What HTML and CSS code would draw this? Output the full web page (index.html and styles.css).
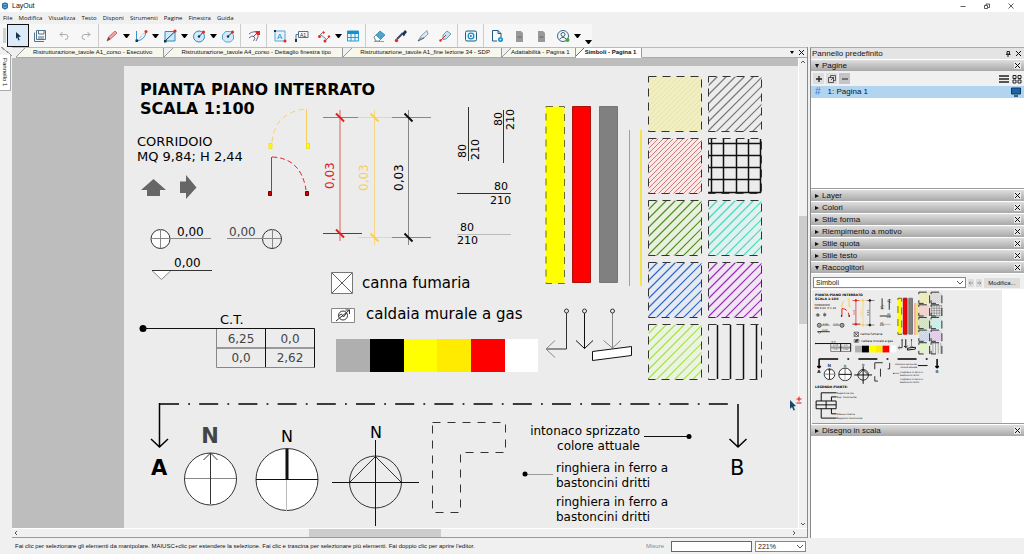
FILE: index.html
```html
<!DOCTYPE html>
<html lang="it">
<head>
    <meta charset="UTF-8">
    <meta name="viewport" content="width=device-width, initial-scale=1.0">
    <title>LayOut</title>
    <link rel="stylesheet" href="styles.css">
</head>
<body>
<div class="app">
    <header class="titlebar">
        <svg class="logo" viewBox="0 0 8 8"><path d="M1 1.5 4 .3 7 1.5V6L4 7.8 1 6z" fill="#2a75ac"/><path d="M2.3 3 4 2.2l1.8.8M2.3 4.8 4 5.6l1.8-.8" fill="none" stroke="#9fd0ee" stroke-width=".7"/></svg>
        <span class="app-name">LayOut</span>
        <div class="window-buttons">
            <button aria-label="Riduci"><svg viewBox="0 0 8 8"><path d="M1.5 4.5h5"/></svg></button>
            <button aria-label="Ripristina"><svg viewBox="0 0 8 8"><path d="M1.5 3.5h3v3h-3zM3 3.5V2h3.5v3.5H5"/></svg></button>
            <button aria-label="Chiudi"><svg viewBox="0 0 8 8"><path d="m1.5 1.5 5 5m0-5-5 5"/></svg></button>
        </div>
    </header>

    <nav class="menubar">
        <button>File</button>
        <button>Modifica</button>
        <button>Visualizza</button>
        <button>Testo</button>
        <button>Disponi</button>
        <button>Strumenti</button>
        <button>Pagine</button>
        <button>Finestra</button>
        <button>Guida</button>
    </nav>

    <div class="toolbar">
        <span class="grip"></span>
        <button class="tool selected" aria-label="Seleziona"><svg viewBox="0 0 14 14"><path class="ink" d="m5 3 5 4.500-2.500.4L8.700 11l-1.300.4-1.100-3L5 9.700z"/></svg></button>
        <button class="tool" aria-label="Salva"><svg viewBox="0 0 14 14"><path d="M3.500 1.500h9v9h-9zM5.500 1.500V5H11V1.500M1.500 3.500v9H11" fill="none" stroke="#53728c"/><path d="M5 7h6v3H5z" fill="#9eb3c3"/></svg></button>
        <div class="history">
            <button class="tool" aria-label="Annulla"><svg viewBox="0 0 14 14"><path d="M5.500 3 3 5.500 5.500 8M3 5.500h5.500Q11 5.500 11 8t-3 2.500" fill="none" stroke="#aaa"/></svg></button>
            <button class="tool" aria-label="Ripeti"><svg viewBox="0 0 14 14"><path d="M8.500 3 11 5.500 8.500 8M11 5.500H5.500Q3 5.500 3 8t3 2.500" fill="none" stroke="#aaa"/></svg></button>
        </div>
        <span class="sep"></span>
        <button class="tool" aria-label="Linea"><svg viewBox="0 0 14 14"><path d="m2 12 1.500-4 6.500-6 2 2-6.500 6z" fill="#f3a3a3" stroke="#c45252" stroke-width=".8"/><path d="m2 12 1.500-4L5.500 10z" fill="#554"/></svg></button>
        <button class="more" aria-label="Altre linee"></button>
        <button class="tool" aria-label="Arco"><svg viewBox="0 0 14 14"><path d="M2.500 2v10Q11 11 12 3" fill="none" stroke="#3d8fc6"/><path d="m2.500 12 9-9" stroke="#88a" stroke-dasharray="1 1"/><path class="ink" d="M1.500 10.500h2.500V13H1.500z"/><circle class="dot" cx="12" cy="2.500" r="1.500"/></svg></button>
        <button class="more" aria-label="Altri archi"></button>
        <button class="tool" aria-label="Rettangolo"><svg viewBox="0 0 14 14"><path d="M2 2.500h10v9.500H2z" fill="#d1e9f8" stroke="#2e8cc5"/><path d="m2 12 10-9.500" stroke="#17415f"/><path class="ink" d="M1 11h2.500v2.500H1z"/><circle class="dot" cx="12" cy="2" r="1.600"/></svg></button>
        <button class="more" aria-label="Altri rettangoli"></button>
        <button class="tool" aria-label="Cerchio"><svg viewBox="0 0 14 14"><circle cx="7" cy="7.500" r="5.500" fill="#d1e9f8" stroke="#2e8cc5"/><path d="m7 7.500 4-4" stroke="#17415f"/><circle class="ink" cx="7" cy="7.500" r="1.200"/><circle class="dot" cx="11.500" cy="3" r="1.600"/></svg></button>
        <button class="more" aria-label="Altri cerchi"></button>
        <button class="tool" aria-label="Poligono"><svg viewBox="0 0 14 14"><path d="M4.500 2.500h5L12.500 6v4l-3 3h-5l-3-3V6z" fill="#d1e9f8" stroke="#59a5d0"/><path d="m7 7.500 4-4" stroke="#17415f"/><circle class="ink" cx="7" cy="7.500" r="1.200"/><circle class="dot" cx="11.500" cy="3" r="1.600"/></svg></button>
        <span class="sep"></span>
        <button class="tool" aria-label="Offset"><svg viewBox="0 0 14 14"><path d="M2 5q5-4 9-1 1 4-2 8M2 9q3-3 5-1.500T6.500 12" fill="none" stroke="#668"/><path d="m6 8 4-4" stroke="#c22"/><path class="dot" d="M8 2h5v4h-3z"/></svg></button>
        <span class="sep"></span>
        <button class="tool" aria-label="Testo"><svg viewBox="0 0 14 14"><path d="M2 2h10v10H2z" fill="#e5f3fb" stroke="#59a5d0"/><text class="icon-text" x="4" y="10">A</text><path class="ink" d="M1 1h2v2H1z"/><circle class="dot" cx="12" cy="12" r="1.500"/></svg></button>
        <button class="tool" aria-label="Etichetta"><svg viewBox="0 0 14 14"><path d="M3.500 2.500h9.500v6H3.500zM3 5.500H1V12" fill="none" stroke="#53728c"/><text class="icon-text tiny" x="5" y="7.500">A1</text><path class="ink" d="M0 10h2v3H0z"/></svg></button>
        <button class="tool" aria-label="Quota"><svg viewBox="0 0 14 14"><path d="m2 7 3-3m3 8 4-4M3.500 5.500l6 5" stroke="#59799a"/><circle class="dot" cx="2.500" cy="7.500" r="1.500"/><circle class="dot" cx="8" cy="12" r="1.500"/><path class="dot" d="m5 3.500 1.500-1.500L8 3.500 6.500 5zM10.500 7.500 12 6l1.500 1.500L12 9z"/></svg></button>
        <button class="more" aria-label="Altre quote"></button>
        <button class="tool" aria-label="Tabella"><svg viewBox="0 0 14 14"><path d="M1.500 2h11v10h-11z" fill="#eaf6fc" stroke="#299bd0"/><path d="M1.500 2h11v3h-11z" fill="#168fcb"/><path d="M5 5v7m4-7v7M1.500 8.500h11" stroke="#299bd0"/></svg></button>
        <span class="sep"></span>
        <button class="tool" aria-label="Gomma"><svg viewBox="0 0 14 14"><path d="m2 8 6-6 5 4-6 6H4z" fill="#4ca4d1" stroke="#2c789f" stroke-width=".7"/><path d="m2 8 2-2 4.500 4.500L7 12H4z" fill="#fff" stroke="#578"  stroke-width=".7"/><path d="M2 12.500h10" stroke="#999"/></svg></button>
        <button class="tool" aria-label="Stile"><svg viewBox="0 0 14 14"><path d="m3 10 5-5" stroke="#446" stroke-width="2"/><path class="ink" d="m7 4 2-.5L11 1l2 2-2 2.500-1 2z"/><circle class="dot" cx="2.500" cy="11.500" r="1.700"/></svg></button>
        <button class="tool" aria-label="Dividi"><svg viewBox="0 0 14 14"><path d="m2 12 3-5 6-5.500L12 5 8 9H5z" fill="#dce9f1" stroke="#678ba5" stroke-width=".8"/><path d="m2 12 6-3" stroke="#456"/></svg></button>
        <button class="tool" aria-label="Unisci"><svg viewBox="0 0 14 14"><path d="m5 6 4-4 4 3-5 5-3 .5z" fill="#c7e4f3" stroke="#5584a5" stroke-width=".8"/><path d="m2 12 6-6" stroke="#c33"/><circle class="dot" cx="2.500" cy="11.500" r="1.200"/></svg></button>
        <span class="sep"></span>
        <button class="tool" aria-label="Presentazione"><svg viewBox="0 0 14 14"><rect x="1.500" y="2" width="11" height="10" rx="1.500" fill="#e9f5fb" stroke="#235d82"/><circle cx="7" cy="7" r="2.800" fill="#fff" stroke="#168fcb" stroke-width="1.300"/><path class="ink" d="m6.300 5.700 2 1.300-2 1.300z"/></svg></button>
        <span class="sep"></span>
        <button class="tool" aria-label="Aggiungi pagina"><svg viewBox="0 0 14 14"><path d="M7 12H2.500V1.500h5.500L11 4.500V8M8 1.500v3h3" fill="none" stroke="#24587e"/><circle cx="10.500" cy="10.500" r="2.500" fill="#168fcb"/><path d="M9.500 10.500h2m-1-1v2" stroke="#fff" stroke-width=".6"/></svg></button>
        <button class="tool" aria-label="Pagina precedente"><svg viewBox="0 0 14 14"><path d="M4 2h5l2 2v9H4z" fill="#999"/><path d="M5.500 8h4" stroke="#666"/></svg></button>
        <button class="tool" aria-label="Pagina successiva"><svg viewBox="0 0 14 14"><path d="M4 2h5l2 2v9H4z" fill="#999"/><path d="M5.500 8h4" stroke="#666"/></svg></button>
        <button class="tool" aria-label="Account"><svg viewBox="0 0 14 14"><circle cx="7" cy="7" r="5.500" fill="#f4f9fc" stroke="#40637f"/><circle cx="7" cy="5.500" r="2" fill="none" stroke="#40637f"/><path d="M3.500 10.500Q7 6 10.500 10.500" fill="none" stroke="#40637f"/><circle cx="11.500" cy="11" r="2" fill="#49a147"/></svg></button>
        <button class="more" aria-label="Menu account"></button>
        <button class="more overflow" aria-label="Altri strumenti"></button>
    </div>

    <div class="workspace">
        <aside class="rail"><button>Pannello 1</button></aside>

        <main class="document">
            <div class="tabs">
                <button class="tab">Ristrutturazione_tavole A1_corso - Esecutivo</button>
                <button class="tab">Ristrutturazione_tavole A4_corso - Dettaglio finestra tipo</button>
                <button class="tab">Ristrutturazione_tavole A1_fine lezione 34 - SDP</button>
                <button class="tab compact">Adattabilità - Pagina 1</button>
                <button class="tab compact active">Simboli - Pagina 1</button>
                <div class="tab-actions">
                    <button class="tab-list" aria-label="Elenco schede"></button>
                    <button class="x" aria-label="Chiudi scheda"></button>
                </div>
            </div>

            <div class="view">
                <div class="canvas">
                    <div class="page">
                        <svg class="sheet" width="674" height="463" viewBox="124 66 674 463">
                            <defs>
                                <!-- retini a 45 gradi -->
                                <symbol id="hatch-wide" viewBox="0 0 53 55">
                                    <path d="M9 0 0 9M18 0 0 18M27 0 0 27M36 0 0 36M45 0 0 45M54 0 0 54M63 0 0 63M72 0 0 72M81 0 0 81M90 0 0 90M99 0 0 99" stroke="currentColor" stroke-width="1.2"/>
                                </symbol>
                                <symbol id="hatch-dense" viewBox="0 0 53 55">
                                    <path d="M5 0 0 5M10 0 0 10M15 0 0 15M20 0 0 20M25 0 0 25M30 0 0 30M35 0 0 35M40 0 0 40M45 0 0 45M50 0 0 50M55 0 0 55M60 0 0 60M65 0 0 65M70 0 0 70M75 0 0 75M80 0 0 80M85 0 0 85M90 0 0 90M95 0 0 95M100 0 0 100M105 0 0 105" stroke="currentColor"/>
                                </symbol>
                            </defs>
                            <g id="drawing" class="drawing">
                                <text class="heading" x="140" y="95">PIANTA PIANO INTERRATO</text>
                                <text class="heading" x="140" y="114">SCALA 1:100</text>
                                <text class="room" x="137" y="146">CORRIDOIO</text>
                                <text class="room" x="137" y="161">MQ 9,84; H 2,44</text>

                                <!-- frecce -->
                                <path d="m153.500 179 12.500 11h-6v6h-13v-6h-6zM180 181.500h6v-6.500l10.500 12.500L186 199v-6h-6z" fill="#666"/>

                                <!-- porte -->
                                <path class="amber" d="M306.500 144v-35"/>
                                <path class="amber" d="M272 142q3-30 34-33" stroke-dasharray="5 4"/>
                                <path d="M269 143.500h3v5h-3zM306.500 143.500h3v5h-3z" fill="#ff0" stroke="#f0e020"/>
                                <path class="red" d="M271.500 191v-34"/>
                                <path class="red" d="M272 157q29 1 34 33" stroke-dasharray="5 3"/>
                                <path d="M268.500 191.500h3v4h-3zM305.500 191.500h3v4h-3z" fill="#d00" stroke="#600"/>

                                <!-- quote altimetriche -->
                                <circle class="thin" cx="160.500" cy="239" r="9.500" fill="#fff"/>
                                <path class="gray" d="M151 238.500h60M160.500 229v19"/>
                                <circle class="thin" cx="272" cy="239" r="9.500"/>
                                <path class="gray" d="M227 238.500h54M272.500 229v19"/>
                                <path class="gray" d="M152 270.500h19l-9.500 9z" fill="#fff"/>
                                <path class="thin" d="M152 270.500h60"/>
                                <text x="177" y="236">0,00</text>
                                <text class="soft" x="229" y="236">0,00</text>
                                <text x="174" y="267">0,00</text>

                                <!-- linee di quota -->
                                <path class="red pale" d="M340 110v131M323 117.500h35"/>
                                <path d="M323 233.500h39" stroke="#922"/>
                                <path class="red tick" d="m336 113.500 8 8m-8 108 8 8"/>
                                <path class="amber pale" d="M374.500 110v135M358 117.500h34m-34 120h34"/>
                                <path class="amber tick" d="m370.500 113.500 8 8m-8 112 8 8"/>
                                <path class="gray" d="M408.500 110v135M392 117.500h39m-39 120h39"/>
                                <path class="black tick" d="m404.500 113.500 8 8m-8 112 8 8"/>
                                <text class="red-text" transform="translate(334 189) rotate(-90)">0,03</text>
                                <text class="amber-text" transform="translate(368 191) rotate(-90)">0,03</text>
                                <text transform="translate(403 191) rotate(-90)">0,03</text>

                                <!-- aperture -->
                                <path class="thin" d="M468.500 107v54M503.500 110v53M457 193.500h54"/>
                                <path d="M457 234.500h54" stroke="#bbb"/>
                                <g class="opening">
                                    <text transform="translate(466 158) rotate(-90)">80</text>
                                    <text transform="translate(479 160) rotate(-90)">210</text>
                                    <text transform="translate(502 126) rotate(-90)">80</text>
                                    <text transform="translate(514 130) rotate(-90)">210</text>
                                    <text x="494" y="190">80</text>
                                    <text x="490" y="204">210</text>
                                    <text x="460" y="231">80</text>
                                    <text x="457" y="244">210</text>
                                </g>

                                <!-- murature -->
                                <path d="M546 106.500h18.500v177H546z" fill="#ff0"/>
                                <path class="black" d="M546 106.500h18.500v177H546z" stroke-dasharray="7 6" opacity=".6"/>
                                <path d="M572.500 106.500h18v176h-18z" fill="#f00" stroke="#a11"/>
                                <path d="M599.500 106.500h18v176h-18z" fill="#808080" stroke="#777"/>
                                <path d="M629.500 130v156" stroke="#f07c7c"/>
                                <path d="M641 130v156" stroke="#f2e44c" stroke-width="2"/>

                                <!-- retini -->
                                <g class="swatches">
                                    <path d="M648.500 76.500h53v55h-53z" fill="#f1eec4"/>
                                    <path d="M648.500 138.500h53v55h-53z" fill="#fae9e6"/>
                                    <path d="M648.500 200.500h53v55h-53z" fill="#e9f0e0"/>
                                    <path d="M708.500 200.500h53v55h-53z" fill="#e1f1ee"/>
                                    <path d="M648.500 262.500h53v55h-53z" fill="#e5eaf2"/>
                                    <path d="M708.500 262.500h53v55h-53z" fill="#f0e5f3"/>
                                    <path d="M648.500 324.500h53v55h-53z" fill="#edf3e1"/>
                                    <use href="#hatch-dense" x="648.500" y="76.500" width="53" height="55" color="#e8e5a4"/>
                                    <use href="#hatch-wide" x="708.500" y="76.500" width="53" height="55" color="#777"/>
                                    <use href="#hatch-dense" x="648.500" y="138.500" width="53" height="55" color="#d07878"/>
                                    <use href="#hatch-wide" x="648.500" y="200.500" width="53" height="55" color="#4f9020"/>
                                    <use href="#hatch-wide" x="708.500" y="200.500" width="53" height="55" color="#44d9c0"/>
                                    <use href="#hatch-wide" x="648.500" y="262.500" width="53" height="55" color="#2f68c8"/>
                                    <use href="#hatch-wide" x="708.500" y="262.500" width="53" height="55" color="#9d2cba"/>
                                    <use href="#hatch-wide" x="648.500" y="324.500" width="53" height="55" color="#a2e44c"/>
                                    <path class="black" d="M708 143.500h53m-53 12h53m-53 12h53m-53 12h53m-53 13h53M711.500 139v54m12-54v54m13-54v54m12-54v54m12-54v54M717.500 325v54m13-54v54m13-54v54m13-54v54" stroke-width="1.500"/>
                                    <path class="swatch" d="M648.500 76.500h53v55h-53zM708.500 76.500h53v55h-53zM648.500 138.500h53v55h-53zM708.500 138.500h53v55h-53zM648.500 200.500h53v55h-53zM708.500 200.500h53v55h-53zM648.500 262.500h53v55h-53zM708.500 262.500h53v55h-53zM648.500 324.500h53v55h-53zM708.500 324.500h53v55h-53z"/>
                                </g>

                                <!-- canna fumaria e caldaia -->
                                <path d="M331.500 272.500h21v21h-21z" fill="#fff" stroke="#777"/>
                                <path class="thin" d="m332 273 20 20m0-20-20 20" stroke-width=".8"/>
                                <path class="gray" d="M331.500 308.500h23v14h-23z" fill="#fff"/>
                                <path class="thin" d="m336 321 13.500-11m-4 0h4v4m-11 2 3-2 2 3 3-4"/>
                                <circle class="thin" cx="343" cy="315.500" r="4.500"/>
                                <text class="legend" x="362" y="288">canna fumaria</text>
                                <text class="legend" x="366" y="319">caldaia murale a gas</text>

                                <!-- etichetta C.T. -->
                                <circle cx="143" cy="328.500" r="3.500"/>
                                <path class="gray" d="M216.500 328v39.500h98"/>
                                <path d="M217 348h98" stroke="#999" stroke-width="2"/>
                                <path class="black" d="M143 328.500h171.500v39M265.500 328v39"/>
                                <text class="room" x="220" y="324">C.T.</text>
                                <g class="soft center">
                                    <text x="241" y="343">6,25</text>
                                    <text x="290" y="343">0,0</text>
                                    <text x="241" y="362">0,0</text>
                                    <text x="290" y="362">2,62</text>
                                </g>

                                <!-- campioni colore -->
                                <path d="M336 339h34v33h-34z" fill="#afafaf"/>
                                <path d="M370 339h34v33h-34z" fill="#000"/>
                                <path d="M404 339h33v33h-33z" fill="#ff0"/>
                                <path d="M437 339h34v33h-34z" fill="#ffeb00"/>
                                <path d="M471 339h34v33h-34z" fill="#f00"/>
                                <path d="M505 339h33v33h-33z" fill="#fff"/>

                                <!-- richiami -->
                                <path class="thin" d="M566.500 313v36H546"/>
                                <path class="gray" d="m555 340.500-9 8.500 9 8.500"/>
                                <path class="black" d="M584.500 313v35.500m-8.500-8 8.500 8 8.500-8"/>
                                <path class="gray" d="M612.500 313v35m-9-7.500 9 7.500 8-7.500"/>
                                <path class="black" d="m592.500 351.500 39-5v9l-39 5z" fill="#fff"/>
                                <circle class="thin" cx="566.500" cy="311" r="2"/>
                                <circle class="thin" cx="584.500" cy="311" r="2"/>
                                <circle class="thin" cx="612.500" cy="311" r="2"/>

                                <!-- linea di sezione -->
                                <path class="section" d="M160 404h568" stroke-dasharray="19 9.200 1.800 9.200"/>
                                <path class="section" d="M159.500 403v44m-8.500-8 8.500 8 8.500-8M738 404v43m-8.500-8 8.500 8 8.500-8"/>
                                <text class="section-a" x="151" y="475">A</text>
                                <text class="section-b" x="730" y="475">B</text>

                                <!-- nord -->
                                <circle class="thin" cx="210.500" cy="479" r="26" fill="#fff"/>
                                <path class="gray" d="M185 478.500h51"/>
                                <path class="thin" d="M210.500 453v51m-7-44 7-7 7 7"/>
                                <circle class="thin" cx="287" cy="479.500" r="31" fill="#fff"/>
                                <path d="M286.500 480v31" stroke="#bbb"/>
                                <path class="black" d="M256 479.500h62"/>
                                <path class="black scaled" d="M287 449v31" stroke-width="3"/>
                                <circle class="thin" cx="375.500" cy="482" r="26"/>
                                <path class="thin" d="m350 482 25.500-25.500L401 482"/>
                                <path class="black" d="M332 482.500h87M375.500 440v86"/>
                                <g class="center">
                                    <text class="north-bold" x="210" y="443">N</text>
                                    <text class="north" x="287" y="442">N</text>
                                    <text class="north" x="376" y="438">N</text>
                                </g>

                                <path class="thin" d="M432.500 422.500h73v30h-45v60h-28z" stroke-dasharray="8 7"/>

                                <!-- note -->
                                <path class="black" d="M644 436.500h45"/>
                                <circle cx="689" cy="436.500" r="2.500"/>
                                <path d="M525 474.500h28" stroke="#999"/>
                                <circle cx="525" cy="474" r="2.500"/>
                                <text class="end" x="640" y="435">intonaco sprizzato</text>
                                <text class="end" x="640" y="450">colore attuale</text>
                                <text x="556" y="472">ringhiera in ferro a</text>
                                <text x="556" y="487">bastoncini dritti</text>
                                <text x="556" y="506">ringhiera in ferro a</text>
                                <text x="556" y="521">bastoncini dritti</text>
                            </g>
                        </svg>
                    </div>
                </div>
                <div class="scroll-v">
                    <svg viewBox="0 0 8 8"><path d="m2 5 2-2 2 2"/></svg>
                    <span class="thumb"></span>
                    <svg viewBox="0 0 8 8"><path d="m2 3 2 2 2-2"/></svg>
                </div>
                <svg class="cursor" viewBox="0 0 14 16"><path d="m1 5 6 6-2.500.5L6 15l-1.500.5L3 12l-2 2z" fill="#164767"/><path d="M7.500 4h5M10 1.500v5M7.500 8h5" stroke="#d11"/></svg>
            </div>
            <div class="scroll-h">
                <svg viewBox="0 0 8 8"><path d="M5 2 3 4l2 2"/></svg>
                <span class="thumb"></span>
                <svg viewBox="0 0 8 8"><path d="m3 2 2 2-2 2"/></svg>
            </div>
        </main>

        <aside class="tray">
            <div class="tray-title">
                <span>Pannello predefinito</span>
                <button aria-label="Blocca"><svg viewBox="0 0 8 8"><path d="M3 1.500h2.500V4H3zM2 4.500h4.500M4 4.500V7"/></svg></button>
                <button class="x" aria-label="Chiudi pannello"></button>
            </div>
            <section class="section-pages">
                <h2 class="panel-head open"><span>Pagine</span><button class="x" aria-label="Chiudi Pagine"></button></h2>
                <div class="page-tools">
                    <button aria-label="Aggiungi"><svg viewBox="0 0 10 10"><path d="M2 5h6M5 2v6" stroke-width="1.300"/></svg></button>
                    <button aria-label="Duplica"><svg viewBox="0 0 10 10"><path d="M1.500 3.500h5v5h-5zM3.500 3.500v-2h5v5h-2M4 6l3-3" stroke-width=".7"/></svg></button>
                    <button class="pressed" aria-label="Rimuovi"><svg viewBox="0 0 10 10"><path d="M2 5h6"/></svg></button>
                    <button class="plain first" aria-label="Vista elenco"><svg viewBox="0 0 10 10"><path d="M0 2h10M0 5h10M0 8h10" stroke-width="1.300"/></svg></button>
                    <button class="plain" aria-label="Vista griglia"><svg viewBox="0 0 10 10"><path d="M1 1.500h3v3H1zM6 1.500h3v3H6zM1 6h3v3H1zM6 6h3v3H6z"/></svg></button>
                </div>
                <div class="page-list">
                    <div class="page-row">
                        <span class="hash">#</span>
                        <span>1: Pagina 1</span>
                        <svg viewBox="0 0 10 10"><path d="M.5 1h9v6h-9z" fill="#1d63a6" stroke="#0b3860"/><path d="M3 9h4" stroke="#0b3860" stroke-width="1.500"/></svg>
                    </div>
                </div>
            </section>
            <h2 class="panel-head"><span>Layer</span><button class="x" aria-label="Chiudi Layer"></button></h2>
            <h2 class="panel-head"><span>Colori</span><button class="x" aria-label="Chiudi Colori"></button></h2>
            <h2 class="panel-head"><span>Stile forma</span><button class="x" aria-label="Chiudi Stile forma"></button></h2>
            <h2 class="panel-head"><span>Riempimento a motivo</span><button class="x" aria-label="Chiudi Riempimento a motivo"></button></h2>
            <h2 class="panel-head"><span>Stile quota</span><button class="x" aria-label="Chiudi Stile quota"></button></h2>
            <h2 class="panel-head"><span>Stile testo</span><button class="x" aria-label="Chiudi Stile testo"></button></h2>
            <h2 class="panel-head open"><span>Raccoglitori</span><button class="x" aria-label="Chiudi Raccoglitori"></button></h2>
            <div class="scrapbook-tools">
                <select aria-label="Raccoglitore"><option>Simboli</option></select>
                <button class="nav" aria-label="Precedente"><svg viewBox="0 0 6 8"><path d="M5 4H1m1.500-1.500L1 4l1.500 1.500"/></svg></button>
                <button class="nav" aria-label="Successivo"><svg viewBox="0 0 6 8"><path d="M1 4h4M3.500 2.500 5 4 3.500 5.500"/></svg></button>
                <button class="edit">Modifica...</button>
            </div>
            <div class="scrapbook">
                <svg viewBox="125 66 931 652">
                    <use href="#drawing"/>
                    <g class="drawing">
                        <text class="heading" x="140" y="545">LEGENDA PIANTE:</text>
                        <path class="black" d="M145 610h98v38h-98zM145 629h98M194 610v38M170 610v-40h75M220 610v-20h25M220 648v25h25M170 648v46h75"/>
                        <text x="246" y="575">Superficie mq</text>
                        <text x="246" y="595">Sup. illuminante</text>
                        <text x="246" y="678">Altezza interna</text>
                        <text x="246" y="699">Rapporto illuminante</text>
                    </g>
                </svg>
            </div>
            <h2 class="panel-head"><span>Disegno in scala</span><button class="x" aria-label="Chiudi Disegno in scala"></button></h2>
        </aside>
    </div>

    <footer class="statusbar">
        <p>Fai clic per selezionare gli elementi da manipolare. MAIUSC+clic per estendere la selezione. Fai clic e trascina per selezionare più elementi. Fai doppio clic per aprire l'editor.</p>
        <label for="misure">Misure</label>
        <input type="text" id="misure">
        <select id="zoom" aria-label="Zoom"><option>221%</option></select>
    </footer>
</div>
</body>
</html>
```
FILE: styles.css
```css
* {
    box-sizing: border-box;
}

body {
    margin: 0;
    font-family: "Liberation Sans", Arial, sans-serif;
    font-size: 7px;
    line-height: 10px;
    color: #111;
    background: #f0f0f0;
}

button {
    font: inherit;
    color: inherit;
    border: 0;
    padding: 0;
    background: none;
}

svg {
    display: block;
    fill: none;
    stroke: none;
}

.app {
    display: flex;
    flex-direction: column;
    height: 100vh;
    min-height: 540px;
}

/* title bar and menus */
.titlebar {
    display: flex;
    align-items: center;
    height: 12px;
    padding: 0 9px 0 1px;
    background: #fff;
}

.logo {
    width: 8px;
    height: 8px;
    margin-right: 3px;
}

.window-buttons {
    display: flex;
    gap: 16px;
    margin-left: auto;
}

.window-buttons button {
    width: 8px;
    height: 8px;
}

.window-buttons svg {
    stroke: #333;
    stroke-width: 0.8;
}

.menubar {
    display: flex;
    gap: 6px;
    height: 12px;
    padding: 0 3px;
    font-family: "Open Sans", sans-serif;
    font-size: 6px;
}

.toolbar {
    display: flex;
    align-items: center;
    align-self: flex-start;
    height: 23px;
    background: #f7f7f7;
}

.grip {
    width: 3px;
    height: 15px;
    margin: 0 1px 0 3px;
    background: #d0d0d0;
}

.tool {
    display: flex;
    align-items: center;
    justify-content: center;
    width: 22px;
    height: 23px;
}

.tool svg {
    width: 14px;
    height: 14px;
}

.tool.selected {
    border: 1px solid #111;
    background: #dcebf7;
}

.ink {
    fill: #12364f;
}

.dot {
    fill: #e02a2a;
}

.icon-text {
    font-size: 8px;
    fill: #168fcb;
}

.icon-text.tiny {
    font-size: 5px;
    fill: #12364f;
}

.history {
    display: flex;
    padding-left: 2px;
}

.sep {
    width: 1px;
    height: 23px;
    margin: 0 2px 0 1px;
    background: #ccc;
}

.more {
    width: 7px;
    height: 23px;
}

.more::before,
.tab-list::before {
    content: "";
    display: block;
    border: 3px solid transparent;
    border-top: 4px solid #000;
    border-bottom: 0;
}

.tab-list::before {
    border-width: 3px 2px 0;
}

.overflow {
    margin-left: 4px;
    padding-top: 12px;
}

/* document */
.workspace {
    display: flex;
    flex: 1;
    min-height: 0;
}

.rail {
    width: 12px;
    padding-top: 8px;
    background: linear-gradient(38deg, transparent 50%, #999 50%, #999 57%, transparent 57%) 0 0 / 12px 9px no-repeat, #f0f0f0;
}

.rail button {
    width: 11px;
    height: 36px;
    border: 1px solid #aaa;
    border-left: 0;
    border-top: 0;
    background: #fff;
    writing-mode: vertical-rl;
    font-size: 6px;
}

.document {
    display: flex;
    flex-direction: column;
    flex: 1;
    min-width: 0;
    border-right: 1px solid #888;
}

.tabs {
    display: flex;
    height: 11px;
    padding-left: 4px;
    border-top: 1px solid #bbb;
    font-size: 6px;
    line-height: 9px;
}

.tab {
    padding: 0 11px 0 17px;
    border-right: 1px solid #999;
    border-bottom: 1px solid #aaa;
    background: linear-gradient(135deg, #f0f0f0 6px, #999 6px, #999 7px, #f7f7ee 7px);
    white-space: nowrap;
}

.tab.compact {
    padding: 0 5px 0 9px;
}

.tab.active {
    font-weight: bold;
    border-bottom-color: #fff;
    background: linear-gradient(135deg, #f7f7ee 5px, #666 5px, #666 6px, #fff 6px);
}

.tab-actions {
    display: flex;
    flex: 1;
    align-items: center;
    justify-content: flex-end;
    gap: 4px;
    padding-right: 2px;
    border-bottom: 1px solid #aaa;
}

.view {
    position: relative;
    display: flex;
    flex: 1;
    min-height: 0;
}

.canvas {
    flex: 1;
    min-width: 0;
    padding: 8px 0 0 112px;
    overflow: hidden;
    background: #bdbdbd;
}

.page {
    height: 100%;
    overflow: hidden;
    background: #ececec;
}

.cursor {
    position: absolute;
    right: 4px;
    top: 337px;
    width: 14px;
    height: 16px;
}

.scroll-v,
.scroll-h {
    display: grid;
    background: #f0f0f0;
}

.scroll-v {
    grid-template-rows: 8px 150fr 108fr 196fr 8px;
    width: 9px;
    border-left: 1px solid #fff;
}

.scroll-h {
    grid-template-columns: 8px 289fr 131fr 349fr 8px;
    height: 10px;
    padding-right: 9px;
    border-top: 1px solid #fff;
    border-bottom: 1px solid #999;
}

.scroll-v svg,
.scroll-h svg {
    width: 8px;
    height: 8px;
    stroke: #555;
}

.thumb {
    background: #cdcdcd;
}

.scroll-v .thumb {
    grid-row: 3;
}

.scroll-v svg:last-child {
    grid-row: 5;
}

.scroll-h .thumb {
    grid-column: 3;
}

.scroll-h svg:last-child {
    grid-column: 5;
}

/* sheet drawing */
.drawing {
    font-family: "DejaVu Sans", Verdana, sans-serif;
    font-size: 12px;
}

.drawing path,
.drawing circle {
    vector-effect: non-scaling-stroke;
}

.drawing .swatches .black,
.drawing .scaled {
    vector-effect: none;
}

.drawing text,
.drawing circle:not([fill]):not(.thin) {
    fill: #000;
}

.drawing .thin {
    stroke: #333;
}

.drawing .gray {
    stroke: #888;
}

.drawing .black {
    stroke: #111;
}

.drawing .red {
    stroke: #d22;
}

.drawing .amber {
    stroke: #f8cf5f;
}

.drawing .pale {
    opacity: 0.7;
}

.drawing .tick {
    stroke-width: 2;
}

.drawing .section {
    stroke: #000;
    stroke-width: 1.5;
}

.drawing .swatch {
    stroke: #333;
    stroke-dasharray: 8 6;
}

.drawing .heading {
    font-size: 16px;
    font-weight: bold;
}

.drawing .room {
    font-size: 13px;
}

.drawing .legend {
    font-size: 15px;
}

.drawing .opening {
    font-size: 11px;
}

.drawing .soft,
.drawing .soft text,
.drawing .north-bold {
    fill: #444;
}

.drawing .red-text {
    fill: #d22;
}

.drawing .amber-text {
    fill: #f8cf5f;
}

.drawing .center {
    text-anchor: middle;
}

.drawing .end {
    text-anchor: end;
}

.drawing .north {
    font-size: 16px;
}

.drawing .north-bold,
.drawing .section-a,
.drawing .section-b {
    font-size: 21px;
}

.drawing .north-bold,
.drawing .section-a {
    font-weight: bold;
}

/* right tray */
.tray {
    display: flex;
    flex-direction: column;
    gap: 1px;
    width: 214px;
    margin-left: 2px;
    border-left: 1px solid #888;
    border-top: 1px solid #aaa;
    background: #fff;
    font-size: 8px;
}

.tray-title {
    display: flex;
    align-items: center;
    gap: 3px;
    height: 11px;
    padding: 0 2px 0 1px;
    background: #e4e4e4;
}

.tray-title span {
    flex: 1;
}

.tray-title svg {
    width: 8px;
    height: 8px;
    stroke: #222;
}

.x {
    width: 7px;
    height: 7px;
    background:
        linear-gradient(45deg, transparent 42%, #111 42%, #111 58%, transparent 58%) center / 5px 5px no-repeat,
        linear-gradient(-45deg, transparent 42%, #111 42%, #111 58%, transparent 58%) center / 5px 5px no-repeat;
}

.panel-head {
    display: flex;
    align-items: center;
    justify-content: space-between;
    height: 11px;
    margin: 0;
    padding: 0 3px 0 4px;
    background: linear-gradient(#dedede, #a8a8a8);
    font-size: 8px;
    font-weight: normal;
}

.panel-head span::before {
    content: "";
    display: inline-block;
    margin-right: 3px;
    border: 2px solid transparent;
    border-left: 4px solid #111;
    border-right: 0;
}

.panel-head.open span::before {
    border: 2px solid transparent;
    border-top: 4px solid #111;
    border-bottom: 0;
}

.panel-head .x {
    background-color: #e8e8e8;
}

.page-tools {
    display: flex;
    gap: 2px;
    padding: 2px;
    background: #f0f0f0;
}

.page-tools button {
    display: flex;
    align-items: center;
    justify-content: center;
    width: 11px;
    height: 11px;
    background: #ddd;
}

.page-tools .pressed {
    background: #c4c4c4;
}

.page-tools .plain {
    background: none;
}

.page-tools .first {
    margin-left: auto;
}

.page-tools svg {
    width: 10px;
    height: 10px;
    stroke: #222;
}

.page-list {
    height: 103px;
    border-bottom: 1px solid #999;
}

.page-row {
    display: flex;
    align-items: center;
    gap: 7px;
    height: 12px;
    padding: 0 3px 0 4px;
    background: #b1d5f0;
}

.page-row .hash {
    color: #3b7bd0;
    font-size: 10px;
}

.page-row svg {
    width: 10px;
    height: 10px;
    margin-left: auto;
}

.scrapbook-tools {
    display: flex;
    align-items: center;
    gap: 2px;
    padding: 3px 4px 1px 2px;
    background: #f0f0f0;
}

select {
    appearance: none;
    height: 11px;
    padding: 0 2px;
    border: 1px solid #888;
    border-radius: 0;
    color: #222;
    font: 7px/9px "Liberation Sans", Arial, sans-serif;
    background:
        linear-gradient(45deg, transparent 45%, #555 45%, #555 60%, transparent 60%) right 5px center / 3px 3px no-repeat,
        linear-gradient(-45deg, transparent 45%, #555 45%, #555 60%, transparent 60%) right 2px center / 3px 3px no-repeat,
        #fff;
}

.scrapbook-tools select {
    flex: 1;
}

.scrapbook-tools .nav {
    width: 6px;
    height: 8px;
    background: #ddd;
}

.nav svg {
    stroke: #999;
}

.scrapbook-tools .edit {
    width: 36px;
    height: 10px;
    background: #ddd;
    font-size: 6px;
}

.scrapbook {
    margin-left: 1px;
    border-bottom: 1px solid #999;
}

.scrapbook svg {
    width: 190px;
    height: 133px;
    background: #ececec;
}

/* status bar */
.statusbar {
    display: flex;
    align-items: center;
    height: 16px;
    padding: 0 218px 0 15px;
    font-size: 6px;
}

.statusbar p {
    flex: 1;
    margin: 0;
    white-space: nowrap;
}

.statusbar label {
    margin-right: 7px;
    color: #888;
}

.statusbar input {
    width: 81px;
    height: 11px;
    margin-right: 3px;
    padding: 0 2px;
    border: 1px solid #666;
    font-size: 7px;
    background: #fff;
}

.statusbar select {
    width: 51px;
}
```
